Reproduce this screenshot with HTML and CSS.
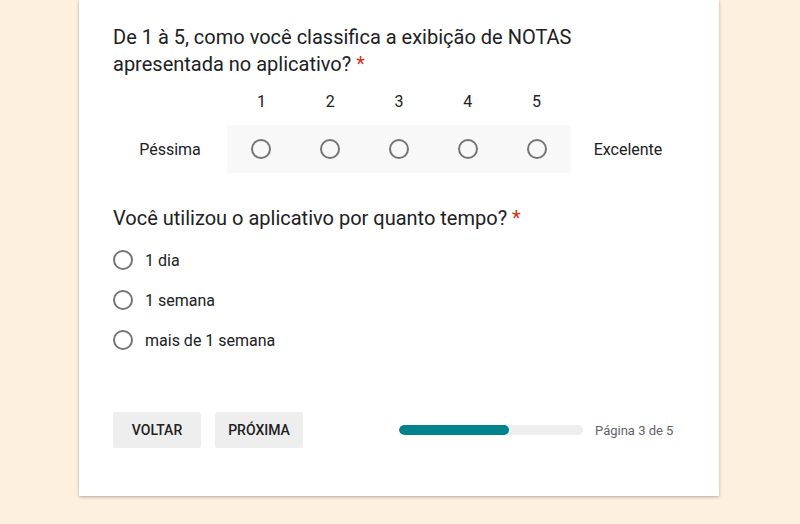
FILE: index.html
```html
<!DOCTYPE html>
<html lang="pt">
<head>
<meta charset="utf-8">
<link rel="stylesheet" href="styles.css">
</head>
<body>
<div class="page">
  <div class="card">
    <div class="question">
      <div class="q-title">De 1 à 5, como você classifica a exibição de NOTAS apresentada no aplicativo? <span class="req">*</span></div>
      <div class="scale">
        <div class="cell"></div>
        <div class="cell num">1</div>
        <div class="cell num">2</div>
        <div class="cell num">3</div>
        <div class="cell num">4</div>
        <div class="cell num">5</div>
        <div class="cell"></div>
        <div class="cell label">Péssima</div>
        <div class="cell band"><span class="radio"></span></div>
        <div class="cell band"><span class="radio"></span></div>
        <div class="cell band"><span class="radio"></span></div>
        <div class="cell band"><span class="radio"></span></div>
        <div class="cell band"><span class="radio"></span></div>
        <div class="cell label">Excelente</div>
      </div>
    </div>
    <div class="question q2">
      <div class="q-title">Você utilizou o aplicativo por quanto tempo? <span class="req">*</span></div>
      <div class="options">
        <div class="option"><span class="radio"></span><span>1 dia</span></div>
        <div class="option"><span class="radio"></span><span>1 semana</span></div>
        <div class="option"><span class="radio"></span><span>mais de 1 semana</span></div>
      </div>
    </div>
    <div class="nav">
      <button class="btn">VOLTAR</button>
      <button class="btn">PRÓXIMA</button>
      <div class="progress">
        <div class="track"><div class="fill" style="width:60%"></div></div>
        <span class="page-label">Página 3 de 5</span>
      </div>
    </div>
  </div>
</div>
</body>
</html>
```
FILE: styles.css
```css
html, body {
  margin: 0;
  padding: 0;
  background: #fdf0de;
  font-family: Roboto, "Noto Sans", Arial, sans-serif;
  color: #202124;
}
body {
  padding-right: 2px;
}
.page {
  width: 640px;
  margin: 0 auto;
  padding-bottom: 28px;
}
.card {
  background: #fff;
  box-shadow: 0 1px 3px rgba(0,0,0,0.3);
  padding: 24px 34px 48px;
  width: 572px;
}
.q-title {
  font-size: 20px;
  line-height: 27px;
  color: #202124;
}
.req {
  color: #d93025;
}
.scale {
  display: grid;
  grid-template-columns: 114px repeat(5, 1fr) 114px;
  grid-template-rows: 24px 48px;
  row-gap: 12px;
  margin-top: 11px;
}
.cell {
  display: flex;
  align-items: center;
  justify-content: center;
  font-size: 16px;
  color: #202124;
}
.band {
  background: #f8f8f8;
}
.radio {
  box-sizing: border-box;
  width: 20px;
  height: 20px;
  border: 2px solid #757575;
  border-radius: 50%;
  flex: none;
}
.q2 {
  margin-top: 32px;
}
.options {
  margin-top: 8px;
}
.option {
  height: 40px;
  display: flex;
  align-items: center;
  gap: 12px;
  font-size: 16px;
}
.nav {
  margin-top: 52px;
  display: flex;
  align-items: center;
}
.btn {
  width: 88px;
  height: 36px;
  border: none;
  border-radius: 3px;
  background: #eeeeee;
  font-family: Roboto, sans-serif;
  font-weight: 500;
  font-size: 14px;
  color: #202124;
  margin-right: 14px;
  padding: 0;
}
.progress {
  margin-left: 82px;
  display: flex;
  align-items: center;
  gap: 12px;
}
.track {
  width: 184px;
  height: 10px;
  border-radius: 5px;
  background: #eeeeee;
  overflow: hidden;
}
.fill {
  height: 100%;
  background: #00838f;
  border-radius: 5px;
}
.page-label {
  font-size: 13px;
  color: #5f6368;
}
```
